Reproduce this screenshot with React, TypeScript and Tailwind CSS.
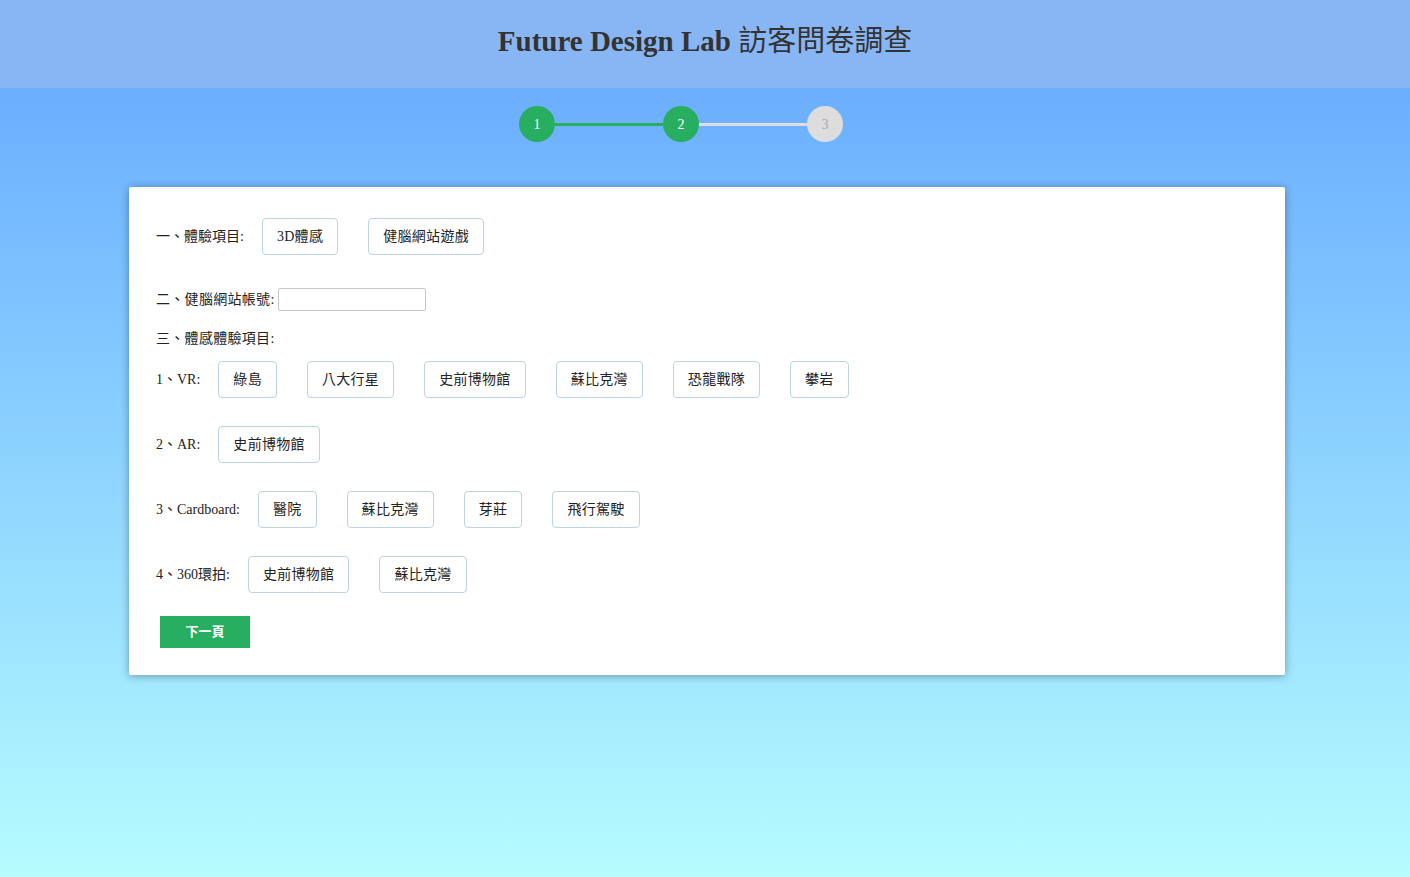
const font = { fontFamily: '"Liberation Serif", "Noto Sans CJK TC", serif' };

function Choice({ label }: { label: string }) {
  return (
    <button className="h-[37px] px-[14px] border border-[#bcd3e2] rounded-[4px] bg-white text-[14px] text-[#222] leading-none tracking-[0.3px] whitespace-nowrap">
      {label}
    </button>
  );
}

function Row({ label, items }: { label: string; items: string[] }) {
  return (
    <div className="flex items-center h-[37px]">
      <span className="text-[14px] text-[#222] whitespace-nowrap">{label}</span>
      <div className="flex gap-[30px] ml-[18px]">
        {items.map((it, i) => (
          <Choice key={i} label={it} />
        ))}
      </div>
    </div>
  );
}

export default function App() {
  const steps = [
    { n: 1, done: true },
    { n: 2, done: true },
    { n: 3, done: false }
  ];

  return (
    <div style={font} className="min-h-[877px] flex flex-col">
      <header className="h-[88px] bg-[#88b6f4] flex items-center justify-center">
        <h1 className="text-[29px] text-[#333] pb-[4px]">
          <span className="font-bold">Future Design Lab</span> 訪客問卷調查
        </h1>
      </header>

      <main className="flex-1 bg-gradient-to-b from-[#6baefe] to-[#b6fcff] pb-[202px]">
        <div className="flex items-center justify-center mt-[18px] pr-[48px]">
          {steps.map((s, i) => (
            <div key={s.n} className="flex items-center">
              {i > 0 && (
                <div className={`w-[108px] h-[3px] ${s.done ? 'bg-[#27ae60]' : 'bg-[#dddddd]'}`} />
              )}
              <div
                className={`w-[36px] h-[36px] rounded-full flex items-center justify-center text-[14px] ${
                  s.done ? 'bg-[#27ae60] text-white' : 'bg-[#dddddd] text-[#aaaaaa]'
                }`}
              >
                {s.n}
              </div>
            </div>
          ))}
        </div>

        <section className="ml-[129px] mr-[125px] mt-[45px] bg-white rounded-[2px] shadow-[0_1px_9px_rgba(0,0,0,0.35)] pl-[27px] pt-[31px] pb-[27px]">
          <Row label="一、體驗項目:" items={['3D體感', '健腦網站遊戲']} />

          <div className="flex items-center mt-[33px] h-[23px]">
            <span className="text-[14px] text-[#222] tracking-[0.3px]">二、健腦網站帳號:</span>
            <input className="ml-[3px] w-[148px] h-[23px] border border-[#c8c8c8] rounded-[2px] outline-none" />
          </div>

          <div className="mt-[17px] h-[20px] flex items-center text-[14px] text-[#222] tracking-[0.3px]">三、體感體驗項目:</div>

          <div className="mt-[13px] flex flex-col gap-[28px]">
            <Row label="1、VR:" items={['綠島', '八大行星', '史前博物館', '蘇比克灣', '恐龍戰隊', '攀岩']} />
            <Row label="2、AR:" items={['史前博物館']} />
            <Row label="3、Cardboard:" items={['醫院', '蘇比克灣', '芽莊', '飛行駕駛']} />
            <Row label="4、360環拍:" items={['史前博物館', '蘇比克灣']} />
          </div>

          <button className="mt-[23px] ml-[4px] w-[90px] h-[32px] bg-[#27ae60] text-white text-[13px] font-bold">
            下一頁
          </button>
        </section>
      </main>
    </div>
  );
}
